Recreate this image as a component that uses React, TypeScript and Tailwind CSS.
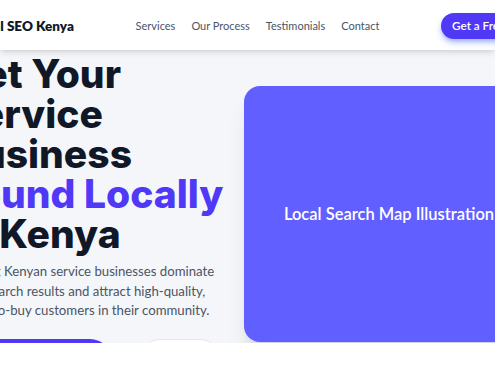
export default function App() {
  return (
    <div className="min-h-screen overflow-hidden bg-white font-['Lato',sans-serif]">
      <header className="relative z-10 flex h-[50px] items-center bg-white pt-[2px] shadow-md">
        <div className="ml-[-28px] flex w-[575px] shrink-0 items-center justify-between">
          <div className="whitespace-nowrap text-[13.5px] font-extrabold text-gray-900">Local SEO Kenya</div>
          <nav className="flex items-center gap-4 whitespace-nowrap text-[11px] text-gray-600">
            <a>Services</a>
            <a>Our Process</a>
            <a>Testimonials</a>
            <a>Contact</a>
          </nav>
          <button className="h-[26px] whitespace-nowrap rounded-full bg-indigo-600 px-[11px] text-[11.7px] font-semibold text-white shadow-md shadow-indigo-300">
            Get a Free Audit
          </button>
        </div>
      </header>

      <section className="h-[293px] overflow-hidden bg-[#f5f6fa]">
        <div className="ml-[-44px] flex w-[640px] gap-[20px]">
          <div className="w-[268px] shrink-0 pt-[4px]">
            <h1 className="-ml-px font-['Inter',sans-serif] text-[39px] font-extrabold leading-[40px] text-gray-900">
              Get Your Service Business <span className="text-indigo-600">Found Locally</span> in Kenya
            </h1>
            <p className="mt-[8px] text-[13.2px] leading-[19.7px] text-gray-600">
              Helping Kenyan service businesses dominate local search results and attract high-quality,
              ready-to-buy customers in their community.
            </p>
            <div className="mt-[18px] flex gap-[26px]">
              <button className="h-[44px] w-[156px] rounded-full bg-indigo-600 text-[13px] font-semibold text-white">
                Get Your Free Audit
              </button>
              <button className="h-[44px] w-[84px] rounded-full border border-gray-200 bg-white text-[13px] font-semibold text-gray-800">
                Learn More
              </button>
            </div>
          </div>
          <div className="mt-[36px] flex h-[256px] w-[290px] shrink-0 items-center justify-center rounded-2xl bg-indigo-500 shadow-xl">
            <span className="whitespace-nowrap text-[16.5px] font-semibold text-white">Local Search Map Illustration</span>
          </div>
        </div>
      </section>
    </div>
  );
}
